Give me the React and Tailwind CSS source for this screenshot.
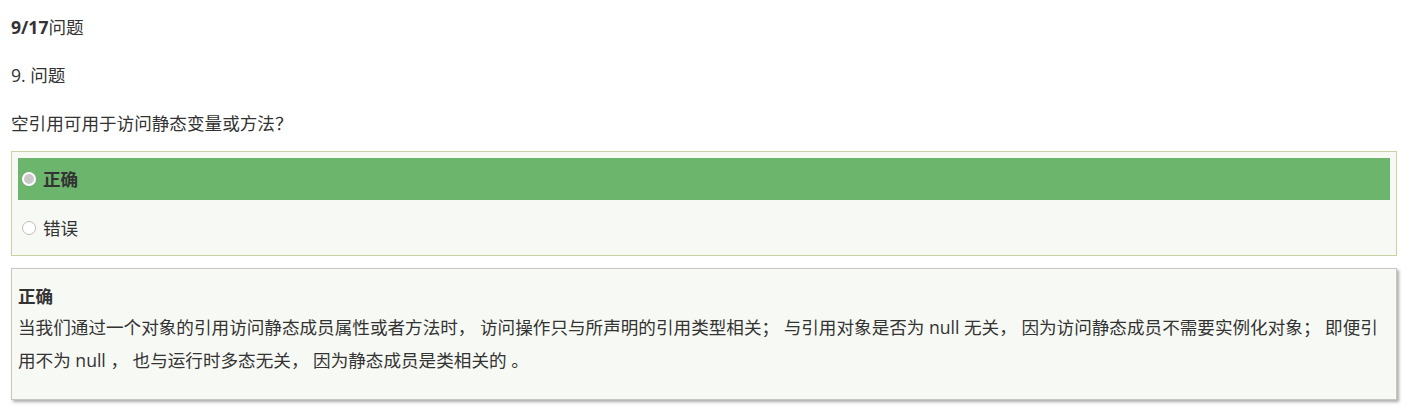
const FONT = { fontFamily: '"Open Sans", "Noto Sans CJK SC", sans-serif' };

function Radio({ checked }) {
  return checked ? (
    <span className="inline-block w-[14px] h-[14px] rounded-full bg-[#c9c9c9] border-2 border-white shadow-[0_0_1px_#999] shrink-0" />
  ) : (
    <span className="inline-block w-[14px] h-[14px] rounded-full bg-white border border-[#bdbdbd] shrink-0" />
  );
}

const OPTIONS = [
  { label: "正确", picked: true },
  { label: "错误", picked: false },
];

export default function App() {
  return (
    <div className="bg-white text-[#333] text-[17.6px] pl-[11px] pr-[9px] pt-[3px] pb-[12px]" style={FONT}>
      <div className="leading-[48px]">
        <span className="font-bold">9/17</span>问题
      </div>
      <div className="leading-[48px]">9. 问题</div>
      <div className="leading-[48px]">空引用可用于访问静态变量或方法？</div>

      <div className="mt-[4px] border border-[#c8d2a4] bg-[#f7f9f4] p-[6px] flex flex-col gap-[7px]">
        {OPTIONS.map((o) => (
          <div
            key={o.label}
            className={
              o.picked
                ? "h-[42px] bg-[#6cb56c] flex items-center pl-[4px] gap-[7px] font-bold"
                : "h-[42px] flex items-center pl-[4px] gap-[7px]"
            }
          >
            <Radio checked={o.picked} />
            <span>{o.label}</span>
          </div>
        ))}
      </div>

      <div className="mt-[12px] border border-[#c6c6c6] bg-[#f7f9f4] shadow-[2px_2px_3px_#aaa] pl-[6px] pr-[6px] pt-[12px] pb-[22px] leading-[33px]">
        <div className="font-bold leading-[30px]">正确</div>
        <p>
          当我们通过一个对象的引用访问静态成员属性或者方法时， 访问操作只与所声明的引用类型相关； 与引用对象是否为 null 无关， 因为访问静态成员不需要实例化对象； 即便引用不为 null ， 也与运行时多态无关， 因为静态成员是类相关的 。
        </p>
      </div>
    </div>
  );
}
